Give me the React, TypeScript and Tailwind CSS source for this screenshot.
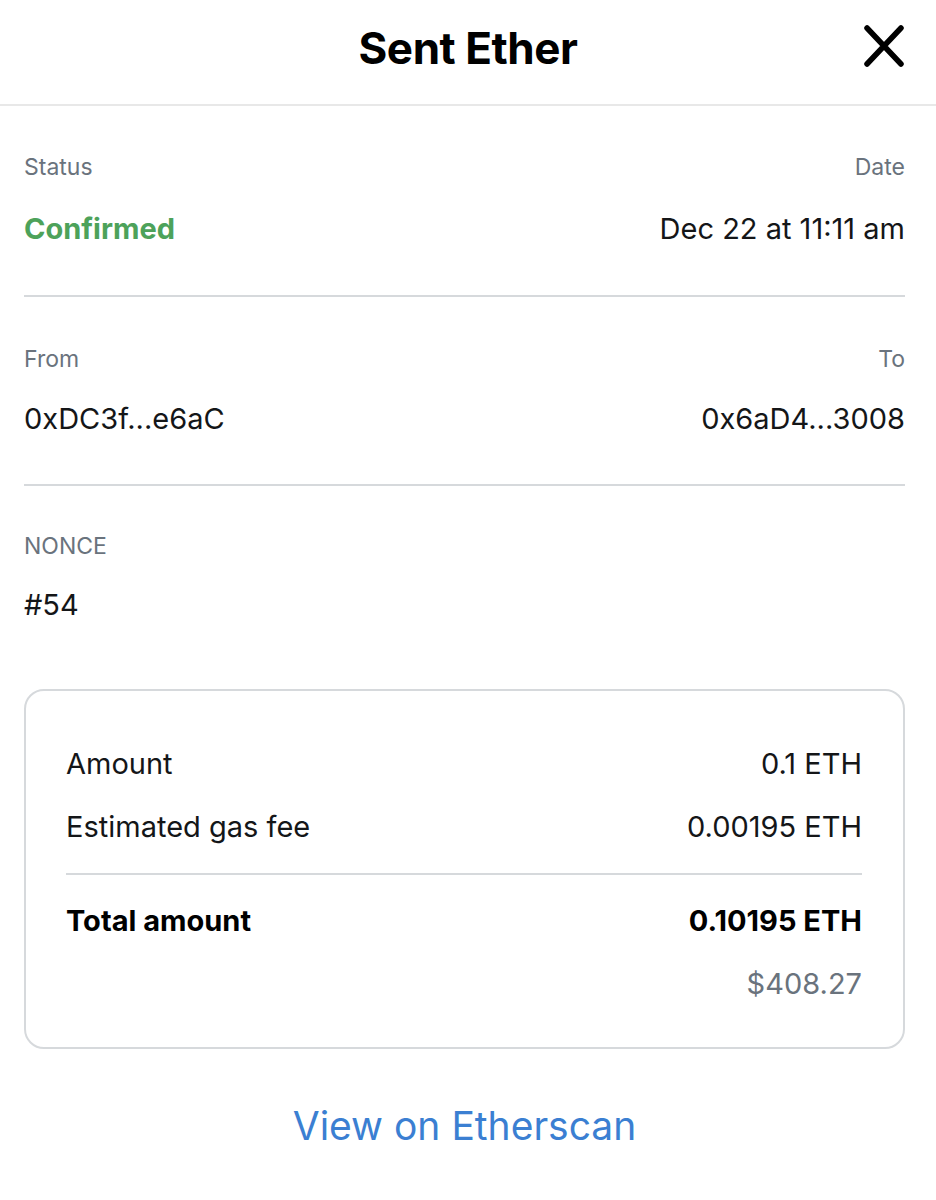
const font = { fontFamily: "Inter, 'Open Sans', sans-serif" };

function Pair({ left, right, leftClass, rightClass }: { left: string; right: string; leftClass: string; rightClass: string }) {
    return (
        <div className="flex items-center justify-between">
            <span className={leftClass}>{left}</span>
            <span className={rightClass}>{right}</span>
        </div>
    );
}

export default function App() {
    const label = "text-[23px] leading-[28px] text-[#6a737d]";
    const value = "text-[29px] leading-[36px] text-[#141618]";
    const bold = "text-[29px] leading-[36px] font-bold text-black";

    return (
        <div className="w-[936px] min-h-[1200px] bg-white" style={font}>
            {/* header */}
            <div className="relative flex h-[106px] items-center justify-center border-b-2 border-[#e8e8e8] pb-2">
                <h1 className="text-[44px] font-bold tracking-[-0.01em] text-black">Sent Ether</h1>
                <button className="absolute right-[32px] top-[25px] text-black" aria-label="Close">
                    <svg width="40" height="42" viewBox="0 0 40 42" fill="none" stroke="currentColor" strokeWidth="5.5" strokeLinecap="round">
                        <path d="M3 3 L37 39 M37 3 L3 39" />
                    </svg>
                </button>
            </div>

            <div className="pl-6 pr-[31px]">
                {/* status / date */}
                <div className="border-b-2 border-[#d6d9dc] pb-[48px] pt-[47px]">
                    <Pair left="Status" right="Date" leftClass={label} rightClass={label} />
                    <div className="mt-[30px]">
                        <Pair
                            left="Confirmed"
                            right="Dec 22 at 11:11 am"
                            leftClass="text-[29px] leading-[36px] font-bold text-[#4da25a]"
                            rightClass={value}
                        />
                    </div>
                </div>

                {/* from / to */}
                <div className="border-b-2 border-[#d6d9dc] pb-[47px] pt-[48px]">
                    <Pair left="From" right="To" leftClass={label} rightClass={label} />
                    <div className="mt-[28px]">
                        <Pair left="0xDC3f...e6aC" right="0x6aD4...3008" leftClass={value} rightClass={value} />
                    </div>
                </div>

                {/* nonce */}
                <div className="pt-[46px]">
                    <div className={label}>NONCE</div>
                    <div className={`mt-[27px] ${value}`}>#54</div>
                </div>

                {/* totals box */}
                <div className="mt-[66px] rounded-[20px] border-2 border-[#d6d9dc] pb-[45px] pl-[40px] pr-[41px] pt-[55px]">
                    <Pair left="Amount" right="0.1 ETH" leftClass={value} rightClass={value} />
                    <div className="mt-[27px]">
                        <Pair left="Estimated gas fee" right="0.00195 ETH" leftClass={value} rightClass={value} />
                    </div>
                    <div className="mt-[28px] h-[2px] bg-[#d6d9dc]" />
                    <div className="mt-[28px]">
                        <Pair left="Total amount" right="0.10195 ETH" leftClass={bold} rightClass={bold} />
                    </div>
                    <div className="mt-[27px] text-right text-[29px] leading-[36px] text-[#6a737d]">$408.27</div>
                </div>

                <div className="mt-[53px] text-center">
                    <a href="#" className="text-[39px] leading-[48px] text-[#3b7fd2]">View on Etherscan</a>
                </div>
            </div>
        </div>
    );
}
